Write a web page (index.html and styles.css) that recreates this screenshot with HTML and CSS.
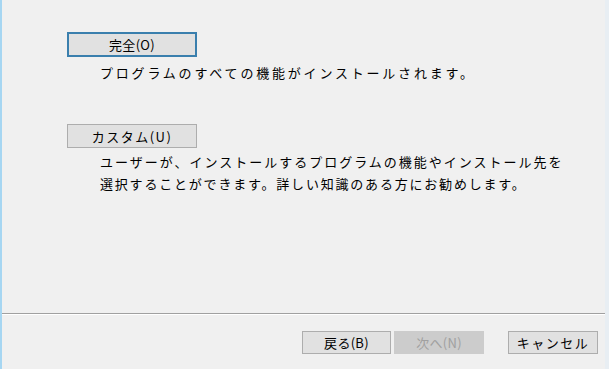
FILE: index.html
```html
<!DOCTYPE html>
<html lang="ja">
<head>
<meta charset="utf-8">
<link rel="stylesheet" href="styles.css">
</head>
<body>
<div class="window">
  <div class="main">
    <button class="btn btn-default opt-btn">完全(O)</button>
    <p class="desc desc-first">プログラムのすべての機能がインストールされます。</p>
    <button class="btn opt-btn opt-custom">カスタム(U)</button>
    <p class="desc desc-second"><span class="wide">ユーザーが、インストールするプログラムの機能やインストール先を</span><br>選択することができます。詳しい知識のある方にお勧めします。</p>
  </div>
  <div class="footer">
    <button class="btn nav-btn">戻る(B)</button>
    <button class="btn nav-btn btn-disabled">次へ(N)</button>
    <button class="btn nav-btn nav-cancel">キャンセル</button>
  </div>
</div>
</body>
</html>
```
FILE: styles.css
```css
html, body {
  margin: 0;
  padding: 0;
  background: #f0f0f0;
}
.window {
  width: 609px;
  height: 369px;
  box-sizing: border-box;
  display: flex;
  flex-direction: column;
  border-left: 2px solid #a6d6f2;
  border-right: 4px solid #e8eef3;
  background: #f0f0f0;
  font-family: "Noto Sans CJK JP", "Noto Sans", sans-serif;
  color: #000;
}
.main {
  flex: 1;
  display: flex;
  flex-direction: column;
  align-items: flex-start;
  padding: 32px 0 0 65px;
}
.btn {
  font-family: "Noto Sans CJK JP", "Noto Sans", sans-serif;
  font-size: 13px;
  color: #000;
  background: #e1e1e1;
  border: 1px solid #adadad;
  box-sizing: border-box;
  padding: 0;
  margin: 0;
  line-height: 1;
  display: flex;
  align-items: center;
  justify-content: center;
  letter-spacing: 0.3px;
}
.opt-btn {
  width: 130px;
  height: 25px;
}
.btn-default {
  border: 2px solid #3a7fad;
}
.opt-custom {
  height: 24px;
  margin-top: 40px;
  letter-spacing: 1.5px;
}
.desc {
  margin: 0 0 0 33px;
  font-size: 13px;
  line-height: 22px;
  letter-spacing: 2.2px;
  white-space: nowrap;
}
.desc-first {
  margin-top: 5px;
  letter-spacing: 2.8px;
}
.desc-second {
  margin-top: 3px;
  letter-spacing: 1.8px;
}
.wide {
  letter-spacing: 2px;
}
.footer {
  height: 56px;
  box-sizing: border-box;
  border-top: 1px solid #a0a0a0;
  box-shadow: inset 0 1px 0 #ffffff;
  display: flex;
  align-items: flex-start;
  padding: 17px 7px 0 0;
  justify-content: flex-end;
}
.nav-btn {
  width: 89px;
  height: 23px;
  margin-left: 3px;
}
.btn-disabled {
  width: 90px;
  background: #cccccc;
  border-color: #cccccc;
  color: #a0a0a0;
}
.nav-cancel {
  width: 90px;
  margin-left: 24px;
  letter-spacing: 1.5px;
}
```
